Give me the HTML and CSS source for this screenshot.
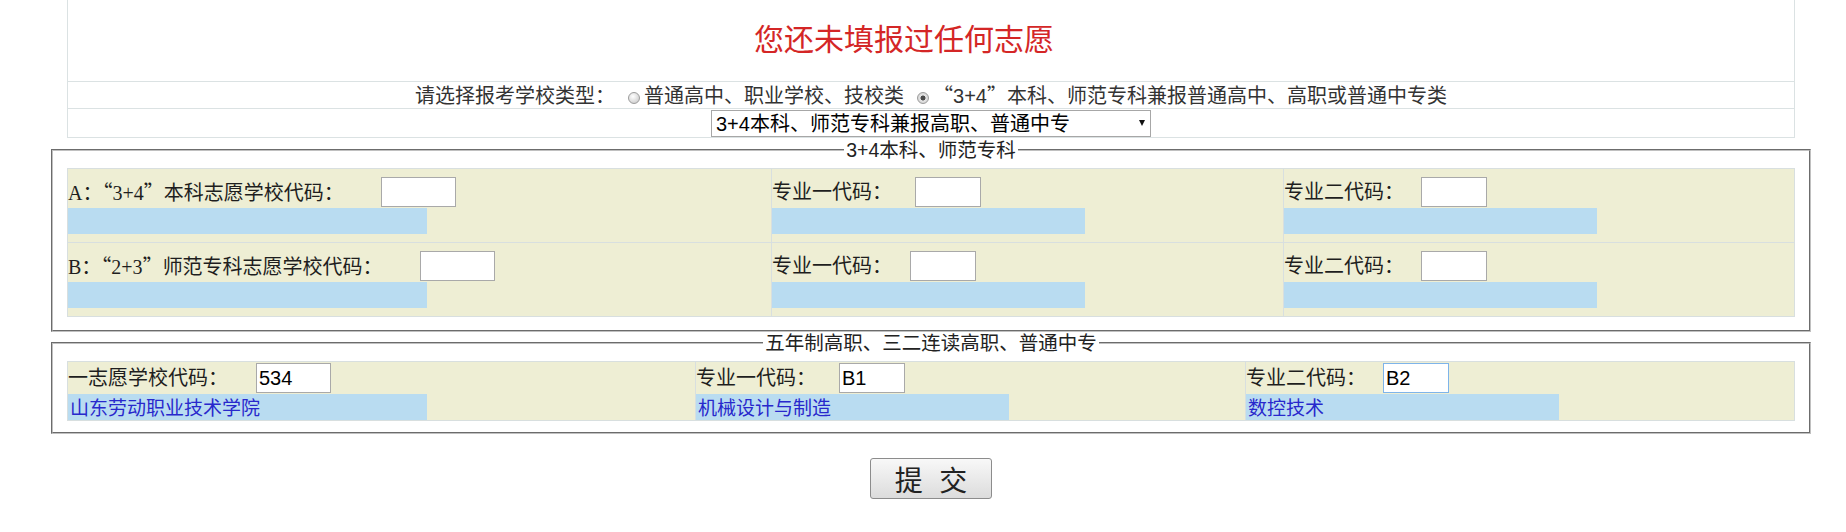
FILE: index.html
```html
<!DOCTYPE html>
<html lang="zh-CN">
<head>
<meta charset="utf-8">
<title>志愿填报</title>
<link rel="stylesheet" href="styles.css">
</head>
<body>
<div class="page">
  <div class="summary">
    <div class="summary-row title-row"><span class="notice">您还未填报过任何志愿</span></div>
    <div class="summary-row type-row">请选择报考学校类型：<input type="radio" name="kind" class="radio">普通高中、职业学校、技校类<input type="radio" name="kind" class="radio" checked><span class="q">“</span>3+4<span class="q">”</span>本科、师范专科兼报普通高中、高职或普通中专类</div>
    <div class="summary-row select-row">
      <div class="select-wrap">
        <select class="type-select"><option>3+4本科、师范专科兼报高职、普通中专</option></select>
      </div>
    </div>
  </div>

  <fieldset class="group group-a">
    <legend>3+4本科、师范专科</legend>
    <div class="grid grid-a">
      <div class="cell">
        <div class="line"><span class="label">A：<span class="q">“</span>3+4<span class="q">”</span>本科志愿学校代码：</span><input type="text" class="code code-wide gap-xl"></div>
        <div class="name name-wide"></div>
      </div>
      <div class="cell">
        <div class="line"><span class="label">专业一代码：</span><input type="text" class="code gap-m"></div>
        <div class="name"></div>
      </div>
      <div class="cell">
        <div class="line"><span class="label">专业二代码：</span><input type="text" class="code gap-s"></div>
        <div class="name"></div>
      </div>
      <div class="cell">
        <div class="line"><span class="label">B：<span class="q">“</span>2+3<span class="q">”</span>师范专科志愿学校代码：</span><input type="text" class="code code-wide gap-xl"></div>
        <div class="name name-wide"></div>
      </div>
      <div class="cell">
        <div class="line"><span class="label">专业一代码：</span><input type="text" class="code gap-n"></div>
        <div class="name"></div>
      </div>
      <div class="cell">
        <div class="line"><span class="label">专业二代码：</span><input type="text" class="code gap-s"></div>
        <div class="name"></div>
      </div>
    </div>
  </fieldset>

  <fieldset class="group group-b">
    <legend>五年制高职、三二连读高职、普通中专</legend>
    <div class="grid grid-b">
      <div class="cell">
        <div class="line"><span class="label">一志愿学校代码：</span><input type="text" class="code code-wide gap-l" value="534"></div>
        <div class="name name-wide">山东劳动职业技术学院</div>
      </div>
      <div class="cell">
        <div class="line"><span class="label">专业一代码：</span><input type="text" class="code gap-m" value="B1"></div>
        <div class="name">机械设计与制造</div>
      </div>
      <div class="cell">
        <div class="line"><span class="label">专业二代码：</span><input type="text" class="code code-active gap-s" value="B2"></div>
        <div class="name">数控技术</div>
      </div>
    </div>
  </fieldset>

  <div class="actions">
    <button type="submit" class="submit">提 交</button>
  </div>
</div>
</body>
</html>
```
FILE: styles.css
```css
* {
  box-sizing: border-box;
}

html,
body {
  margin: 0;
  background: #fff;
}

body {
  font-family: "Liberation Sans", "Noto Sans CJK SC", sans-serif;
  color: #222;
}

.page {
  width: 1760px;
  margin-left: 51px;
}

/* ---------- summary table ---------- */
.summary {
  margin: 0 16px;
  border: 1px solid #dbe2e3;
  border-top: 0;
}

.summary-row {
  border-bottom: 1px solid #dbe2e3;
}

.summary-row:last-child {
  border-bottom: 0;
}

.title-row {
  height: 82px;
  padding: 0 54px 7px 0;
  display: flex;
  justify-content: center;
  align-items: center;
}

.notice {
  font-family: "Noto Sans CJK SC", sans-serif;
  font-size: 30px;
  line-height: 30px;
  color: #d42626;
}

.type-row {
  height: 27px;
  text-align: center;
  font-size: 20px;
  line-height: 26px;
  color: #333;
  white-space: nowrap;
}

.radio {
  appearance: none;
  -webkit-appearance: none;
  width: 12px;
  height: 12px;
  margin: 0 4px 0 13px;
  padding: 0;
  border: 1px solid #9c9c9c;
  border-radius: 50%;
  background: radial-gradient(circle at 40% 35%, #ffffff 0, #e4e4e4 45%, #c4c4c4 100%);
  vertical-align: -1px;
}

.radio:checked {
  background: radial-gradient(circle, #4a4a4a 0, #4a4a4a 2.2px, #e6e6e6 2.8px, #c6c6c6 100%);
}

.q {
  font-family: "Noto Sans CJK SC", sans-serif;
  font-feature-settings: "fwid" 1;
}

.select-row {
  height: 28px;
  padding-top: 1px;
  display: flex;
  justify-content: center;
  align-items: flex-start;
}

.select-wrap {
  position: relative;
  width: 440px;
  height: 27px;
}

.select-wrap::after {
  content: "";
  position: absolute;
  right: 6px;
  top: 10px;
  border-left: 3px solid transparent;
  border-right: 3px solid transparent;
  border-top: 6px solid #111;
  pointer-events: none;
}

.type-select {
  appearance: none;
  -webkit-appearance: none;
  display: block;
  width: 100%;
  height: 100%;
  margin: 0;
  padding: 0 0 0 4px;
  border: 1px solid #a7a7a7;
  border-radius: 0;
  background: #fff;
  color: #000;
  font-family: "Liberation Sans", "Noto Sans CJK SC", sans-serif;
  font-size: 20px;
}

/* ---------- fieldsets ---------- */
.group {
  margin: 0;
  border: 2px groove #c0c0c0;
  min-inline-size: auto;
}

.group-a {
  margin-top: 2px;
  padding: 8px 14px 13px;
}

.group-b {
  margin-top: 1px;
  padding: 8px 14px 11px;
}

.group legend {
  margin: 0 auto;
  padding: 0 2px;
  font-size: 19.5px;
  line-height: 20px;
  color: #222;
}

.grid {
  display: grid;
  gap: 1px;
  background: #d8dfdf;
  border: 1px solid #d8dfdf;
}

.grid-a {
  grid-template-columns: 703px 511px 510px;
}

.grid-b {
  grid-template-columns: 627px 549px 548px;
}

.cell {
  background: #eeeed4;
}

.grid-a .cell {
  padding: 8px 0;
}

.grid-b .cell {
  padding: 1px 0 0;
}

.line {
  height: 30px;
  display: flex;
  align-items: center;
  white-space: nowrap;
}

.label {
  font-family: "Liberation Serif", "Noto Sans CJK SC", serif;
  font-size: 20px;
  line-height: 30px;
  color: #1e1e1e;
}

.code {
  width: 66px;
  height: 30px;
  margin: 0;
  padding: 0 2px;
  border: 1px solid #a9a9a9;
  border-radius: 0;
  background: #fff;
  color: #000;
  font-family: "Liberation Sans", sans-serif;
  font-size: 20px;
  outline: none;
}

.code-wide {
  width: 75px;
}

.code-active {
  border-color: #7eb4ea;
}

.gap-xl {
  margin-left: 37px;
}

.gap-l {
  margin-left: 28px;
}

.gap-m {
  margin-left: 23px;
}

.gap-n {
  margin-left: 18px;
}

.gap-s {
  margin-left: 17px;
}

.name {
  width: 313px;
  height: 26px;
  margin-top: 1px;
  padding-left: 2px;
  background: #b9dcf1;
  color: #2828cc;
  font-family: "Noto Sans CJK SC", sans-serif;
  font-size: 19px;
  line-height: 26px;
  white-space: nowrap;
}

.name-wide {
  width: 359px;
}

/* ---------- submit ---------- */
.actions {
  display: flex;
  justify-content: center;
  padding-top: 24px;
}

.submit {
  width: 122px;
  height: 41px;
  margin: 0;
  padding: 0;
  border: 1px solid #8c8c8c;
  border-radius: 3px;
  background: linear-gradient(#f8f8f8, #dcdcdc);
  color: #222;
  font-family: "Noto Sans CJK SC", sans-serif;
  font-size: 28px;
  line-height: 1;
  word-spacing: 10px;
}
```
